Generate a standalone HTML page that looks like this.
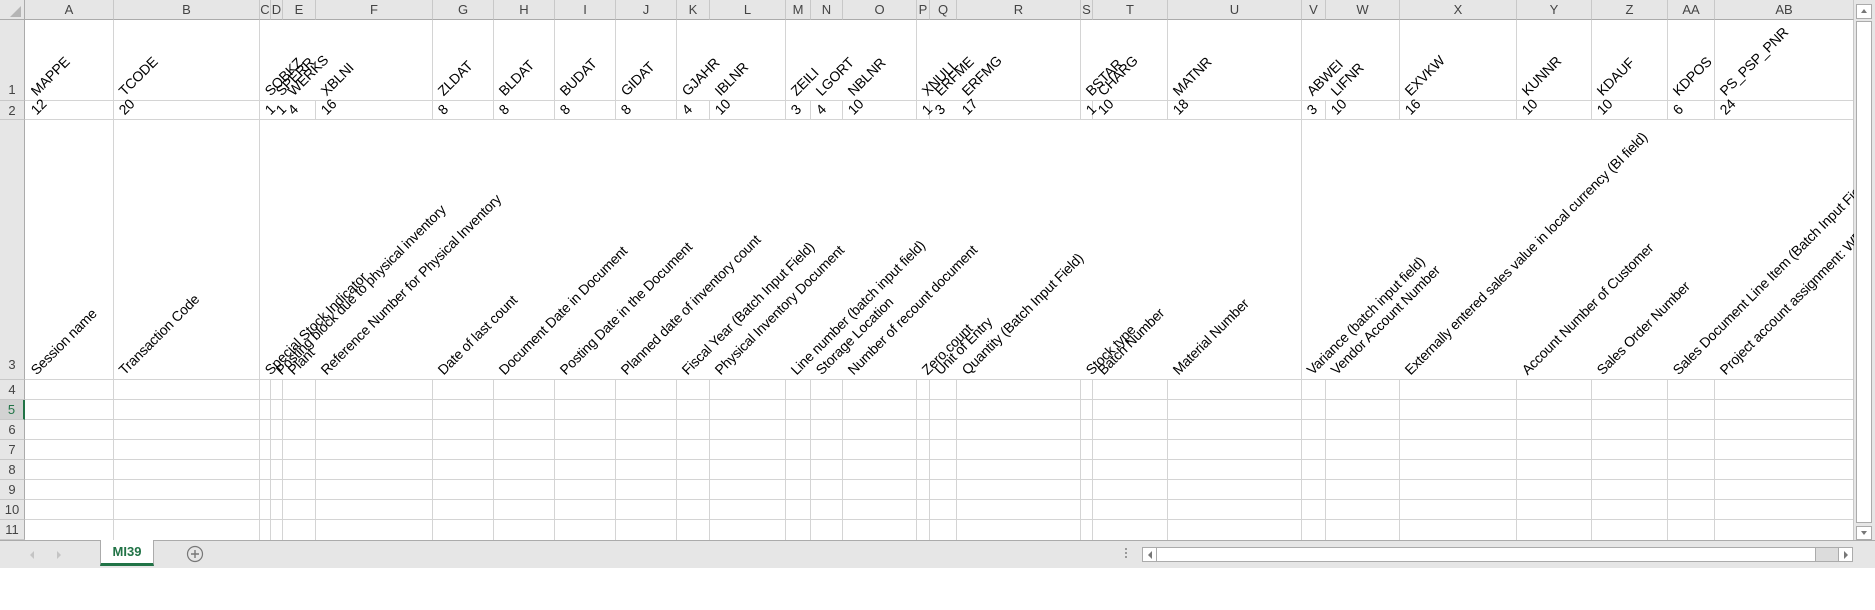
<!DOCTYPE html>
<html><head><meta charset="utf-8"><style>
*{margin:0;padding:0;box-sizing:border-box}
body{width:1875px;height:568px;overflow:hidden;background:#fff;font-family:"Liberation Sans",Arial,sans-serif;position:relative}
.hdr{position:absolute;top:0;height:20px;background:#e6e6e6;border-right:1px solid #c8c8c8;border-bottom:1px solid #ababab;font-size:13px;color:#444;text-align:center;line-height:20px}
.rh{position:absolute;left:0;width:25px;background:#e6e6e6;border-right:1px solid #ababab;border-bottom:1px solid #c8c8c8;font-size:13px;color:#444;text-align:center}
.v{position:absolute;width:1px;background:#d4d4d4}
.h{position:absolute;height:1px;background:#d4d4d4;left:25px;width:1829px}
#cells{position:absolute;left:31px;top:20px;width:1823px;height:520px;overflow:hidden}
#cells .in{position:absolute;left:0;top:0;width:1829px;height:520px}
.t{position:absolute;font-size:14px;letter-spacing:-0.2px;line-height:14px;height:14px;white-space:nowrap;color:#000;transform-origin:0 100%;transform:rotate(-45deg)}
</style></head><body>
<div style="position:absolute;left:0;top:0;width:25px;height:20px;background:#e6e6e6;border-right:1px solid #ababab;border-bottom:1px solid #ababab"></div>
<svg style="position:absolute;left:10px;top:6px" width="12" height="12"><polygon points="11,0 11,11 0,11" fill="#b5b5b5"/></svg>
<div class="hdr" style="left:25px;width:89px">A</div>
<div class="hdr" style="left:114px;width:146px">B</div>
<div class="hdr" style="left:260px;width:11px">C</div>
<div class="hdr" style="left:271px;width:12px">D</div>
<div class="hdr" style="left:283px;width:33px">E</div>
<div class="hdr" style="left:316px;width:117px">F</div>
<div class="hdr" style="left:433px;width:61px">G</div>
<div class="hdr" style="left:494px;width:61px">H</div>
<div class="hdr" style="left:555px;width:61px">I</div>
<div class="hdr" style="left:616px;width:61px">J</div>
<div class="hdr" style="left:677px;width:33px">K</div>
<div class="hdr" style="left:710px;width:76px">L</div>
<div class="hdr" style="left:786px;width:25px">M</div>
<div class="hdr" style="left:811px;width:32px">N</div>
<div class="hdr" style="left:843px;width:74px">O</div>
<div class="hdr" style="left:917px;width:13px">P</div>
<div class="hdr" style="left:930px;width:27px">Q</div>
<div class="hdr" style="left:957px;width:124px">R</div>
<div class="hdr" style="left:1081px;width:12px">S</div>
<div class="hdr" style="left:1093px;width:75px">T</div>
<div class="hdr" style="left:1168px;width:134px">U</div>
<div class="hdr" style="left:1302px;width:24px">V</div>
<div class="hdr" style="left:1326px;width:74px">W</div>
<div class="hdr" style="left:1400px;width:117px">X</div>
<div class="hdr" style="left:1517px;width:75px">Y</div>
<div class="hdr" style="left:1592px;width:76px">Z</div>
<div class="hdr" style="left:1668px;width:47px">AA</div>
<div class="hdr" style="left:1715px;width:139px">AB</div>
<div class="rh" style="top:20px;height:81px;line-height:140px">1</div>
<div class="rh" style="top:101px;height:19px;line-height:19px">2</div>
<div class="rh" style="top:120px;height:260px;line-height:490px">3</div>
<div class="rh" style="top:380px;height:20px;line-height:20px">4</div>
<div class="rh" style="top:400px;height:20px;line-height:20px;background:#d2d2d2;border-right:2px solid #217346;color:#217346">5</div>
<div class="rh" style="top:420px;height:20px;line-height:20px">6</div>
<div class="rh" style="top:440px;height:20px;line-height:20px">7</div>
<div class="rh" style="top:460px;height:20px;line-height:20px">8</div>
<div class="rh" style="top:480px;height:20px;line-height:20px">9</div>
<div class="rh" style="top:500px;height:20px;line-height:20px">10</div>
<div class="rh" style="top:520px;height:20px;line-height:20px">11</div>
<div class="h" style="top:100px"></div><div class="h" style="top:119px"></div><div class="h" style="top:379px"></div>
<div class="h" style="top:399px"></div><div class="h" style="top:419px"></div><div class="h" style="top:439px"></div>
<div class="h" style="top:459px"></div><div class="h" style="top:479px"></div><div class="h" style="top:499px"></div><div class="h" style="top:519px"></div>
<div class="v" style="left:113px;top:20px;height:520px"></div>
<div class="v" style="left:259px;top:20px;height:520px"></div>
<div class="v" style="left:1301px;top:20px;height:520px"></div>
<div class="v" style="left:270px;top:380px;height:160px"></div>
<div class="v" style="left:282px;top:380px;height:160px"></div>
<div class="v" style="left:315px;top:101px;height:19px"></div><div class="v" style="left:315px;top:380px;height:160px"></div>
<div class="v" style="left:432px;top:20px;height:100px"></div><div class="v" style="left:432px;top:380px;height:160px"></div>
<div class="v" style="left:493px;top:20px;height:100px"></div><div class="v" style="left:493px;top:380px;height:160px"></div>
<div class="v" style="left:554px;top:20px;height:100px"></div><div class="v" style="left:554px;top:380px;height:160px"></div>
<div class="v" style="left:615px;top:20px;height:100px"></div><div class="v" style="left:615px;top:380px;height:160px"></div>
<div class="v" style="left:676px;top:20px;height:100px"></div><div class="v" style="left:676px;top:380px;height:160px"></div>
<div class="v" style="left:709px;top:101px;height:19px"></div><div class="v" style="left:709px;top:380px;height:160px"></div>
<div class="v" style="left:785px;top:20px;height:100px"></div><div class="v" style="left:785px;top:380px;height:160px"></div>
<div class="v" style="left:810px;top:101px;height:19px"></div><div class="v" style="left:810px;top:380px;height:160px"></div>
<div class="v" style="left:842px;top:101px;height:19px"></div><div class="v" style="left:842px;top:380px;height:160px"></div>
<div class="v" style="left:916px;top:20px;height:100px"></div><div class="v" style="left:916px;top:380px;height:160px"></div>
<div class="v" style="left:929px;top:101px;height:19px"></div><div class="v" style="left:929px;top:380px;height:160px"></div>
<div class="v" style="left:956px;top:380px;height:160px"></div>
<div class="v" style="left:1080px;top:20px;height:100px"></div><div class="v" style="left:1080px;top:380px;height:160px"></div>
<div class="v" style="left:1092px;top:101px;height:19px"></div><div class="v" style="left:1092px;top:380px;height:160px"></div>
<div class="v" style="left:1167px;top:20px;height:100px"></div><div class="v" style="left:1167px;top:380px;height:160px"></div>
<div class="v" style="left:1325px;top:101px;height:19px"></div><div class="v" style="left:1325px;top:380px;height:160px"></div>
<div class="v" style="left:1399px;top:20px;height:100px"></div><div class="v" style="left:1399px;top:380px;height:160px"></div>
<div class="v" style="left:1516px;top:20px;height:100px"></div><div class="v" style="left:1516px;top:380px;height:160px"></div>
<div class="v" style="left:1591px;top:20px;height:100px"></div><div class="v" style="left:1591px;top:380px;height:160px"></div>
<div class="v" style="left:1667px;top:20px;height:100px"></div><div class="v" style="left:1667px;top:380px;height:160px"></div>
<div class="v" style="left:1714px;top:20px;height:100px"></div><div class="v" style="left:1714px;top:380px;height:160px"></div>
<div class="v" style="left:1853px;top:20px;height:520px;background:#c8c8c8"></div>

<div id="cells"><div class="in">
<span class="t" style="left:7px;top:64px">MAPPE</span>
<span class="t" style="left:95px;top:64px">TCODE</span>
<span class="t" style="left:241px;top:64px">SOBKZ</span>
<span class="t" style="left:252px;top:64px">SPERR</span>
<span class="t" style="left:264px;top:64px">WERKS</span>
<span class="t" style="left:297px;top:64px">XBLNI</span>
<span class="t" style="left:414px;top:64px">ZLDAT</span>
<span class="t" style="left:475px;top:64px">BLDAT</span>
<span class="t" style="left:536px;top:64px">BUDAT</span>
<span class="t" style="left:597px;top:64px">GIDAT</span>
<span class="t" style="left:658px;top:64px">GJAHR</span>
<span class="t" style="left:691px;top:64px">IBLNR</span>
<span class="t" style="left:767px;top:64px">ZEILI</span>
<span class="t" style="left:792px;top:64px">LGORT</span>
<span class="t" style="left:824px;top:64px">NBLNR</span>
<span class="t" style="left:898px;top:64px">XNULL</span>
<span class="t" style="left:911px;top:64px">ERFME</span>
<span class="t" style="left:938px;top:64px">ERFMG</span>
<span class="t" style="left:1062px;top:64px">BSTAR</span>
<span class="t" style="left:1074px;top:64px">CHARG</span>
<span class="t" style="left:1149px;top:64px">MATNR</span>
<span class="t" style="left:1283px;top:64px">ABWEI</span>
<span class="t" style="left:1307px;top:64px">LIFNR</span>
<span class="t" style="left:1381px;top:64px">EXVKW</span>
<span class="t" style="left:1498px;top:64px">KUNNR</span>
<span class="t" style="left:1573px;top:64px">KDAUF</span>
<span class="t" style="left:1649px;top:64px">KDPOS</span>
<span class="t" style="left:1696px;top:64px">PS_PSP_PNR</span>
<span class="t" style="left:7px;top:83px">12</span>
<span class="t" style="left:95px;top:83px">20</span>
<span class="t" style="left:241px;top:83px">1</span>
<span class="t" style="left:252px;top:83px">1</span>
<span class="t" style="left:264px;top:83px">4</span>
<span class="t" style="left:297px;top:83px">16</span>
<span class="t" style="left:414px;top:83px">8</span>
<span class="t" style="left:475px;top:83px">8</span>
<span class="t" style="left:536px;top:83px">8</span>
<span class="t" style="left:597px;top:83px">8</span>
<span class="t" style="left:658px;top:83px">4</span>
<span class="t" style="left:691px;top:83px">10</span>
<span class="t" style="left:767px;top:83px">3</span>
<span class="t" style="left:792px;top:83px">4</span>
<span class="t" style="left:824px;top:83px">10</span>
<span class="t" style="left:898px;top:83px">1</span>
<span class="t" style="left:911px;top:83px">3</span>
<span class="t" style="left:938px;top:83px">17</span>
<span class="t" style="left:1062px;top:83px">1</span>
<span class="t" style="left:1074px;top:83px">10</span>
<span class="t" style="left:1149px;top:83px">18</span>
<span class="t" style="left:1283px;top:83px">3</span>
<span class="t" style="left:1307px;top:83px">10</span>
<span class="t" style="left:1381px;top:83px">16</span>
<span class="t" style="left:1498px;top:83px">10</span>
<span class="t" style="left:1573px;top:83px">10</span>
<span class="t" style="left:1649px;top:83px">6</span>
<span class="t" style="left:1696px;top:83px">24</span>
<span class="t" style="left:7px;top:343px">Session name</span>
<span class="t" style="left:95px;top:343px">Transaction Code</span>
<span class="t" style="left:241px;top:343px">Special Stock Indicator</span>
<span class="t" style="left:252px;top:343px">Posting block due to physical inventory</span>
<span class="t" style="left:264px;top:343px">Plant</span>
<span class="t" style="left:297px;top:343px">Reference Number for Physical Inventory</span>
<span class="t" style="left:414px;top:343px">Date of last count</span>
<span class="t" style="left:475px;top:343px">Document Date in Document</span>
<span class="t" style="left:536px;top:343px">Posting Date in the Document</span>
<span class="t" style="left:597px;top:343px">Planned date of inventory count</span>
<span class="t" style="left:658px;top:343px">Fiscal Year (Batch Input Field)</span>
<span class="t" style="left:691px;top:343px">Physical Inventory Document</span>
<span class="t" style="left:767px;top:343px">Line number (batch input field)</span>
<span class="t" style="left:792px;top:343px">Storage Location</span>
<span class="t" style="left:824px;top:343px">Number of recount document</span>
<span class="t" style="left:898px;top:343px">Zero count</span>
<span class="t" style="left:911px;top:343px">Unit of Entry</span>
<span class="t" style="left:938px;top:343px">Quantity (Batch Input Field)</span>
<span class="t" style="left:1062px;top:343px">Stock type</span>
<span class="t" style="left:1074px;top:343px">Batch Number</span>
<span class="t" style="left:1149px;top:343px">Material Number</span>
<span class="t" style="left:1283px;top:343px">Variance (batch input field)</span>
<span class="t" style="left:1307px;top:343px">Vendor Account Number</span>
<span class="t" style="left:1381px;top:343px">Externally entered sales value in local currency (BI field)</span>
<span class="t" style="left:1498px;top:343px">Account Number of Customer</span>
<span class="t" style="left:1573px;top:343px">Sales Order Number</span>
<span class="t" style="left:1649px;top:343px">Sales Document Line Item (Batch Input Field)</span>
<span class="t" style="left:1696px;top:343px">Project account assignment: WBS element</span>
</div></div>

<div style="position:absolute;left:1854px;top:0;width:21px;height:540px;background:#e6e6e6"></div>
<div style="position:absolute;left:1856px;top:4px;width:16px;height:15px;background:#fff;border:1px solid #ababab"></div>
<svg style="position:absolute;left:1860px;top:8px" width="8" height="6"><polygon points="4,1 7,5 1,5" fill="#777"/></svg>
<div style="position:absolute;left:1856px;top:21px;width:16px;height:502px;background:#fff;border:1px solid #ababab"></div>
<div style="position:absolute;left:1856px;top:526px;width:16px;height:14px;background:#fff;border:1px solid #ababab"></div>
<svg style="position:absolute;left:1860px;top:530px" width="8" height="6"><polygon points="1,1 7,1 4,5" fill="#777"/></svg>
<div style="position:absolute;left:0;top:540px;width:1875px;height:28px;background:#e6e6e6;border-top:1px solid #ababab"></div>
<svg style="position:absolute;left:26px;top:549px" width="40" height="12"><polygon points="4,6 8,2 8,10" fill="#c4c4c4"/><polygon points="35,6 31,2 31,10" fill="#c4c4c4"/></svg>
<div style="position:absolute;left:100px;top:540px;width:54px;height:26px;background:#fff;border-left:1px solid #ababab;border-right:1px solid #ababab;border-bottom:3px solid #217346;color:#217346;font-weight:bold;font-size:13px;text-align:center;line-height:24px">MI39</div>
<svg style="position:absolute;left:186px;top:545px" width="18" height="18"><circle cx="9" cy="9" r="7.5" fill="none" stroke="#777" stroke-width="1.2"/><path d="M9 5V13M5 9H13" stroke="#777" stroke-width="1.4"/></svg>
<div style="position:absolute;left:1125px;top:548px;width:2px;height:2px;background:#999;box-shadow:0 4px 0 #999,0 8px 0 #999"></div>
<div style="position:absolute;left:1142px;top:547px;width:711px;height:15px;background:#dcdcdc;border:1px solid #ababab"></div>
<div style="position:absolute;left:1143px;top:548px;width:14px;height:13px;background:#fff;border-right:1px solid #ababab"></div>
<svg style="position:absolute;left:1146px;top:551px" width="8" height="8"><polygon points="2,4 6,0 6,8" fill="#777"/></svg>
<div style="position:absolute;left:1157px;top:548px;width:659px;height:13px;background:#fff;border-right:1px solid #ababab"></div>
<div style="position:absolute;left:1838px;top:548px;width:14px;height:13px;background:#fff;border-left:1px solid #ababab"></div>
<svg style="position:absolute;left:1842px;top:551px" width="8" height="8"><polygon points="6,4 2,0 2,8" fill="#777"/></svg>
</body></html>
